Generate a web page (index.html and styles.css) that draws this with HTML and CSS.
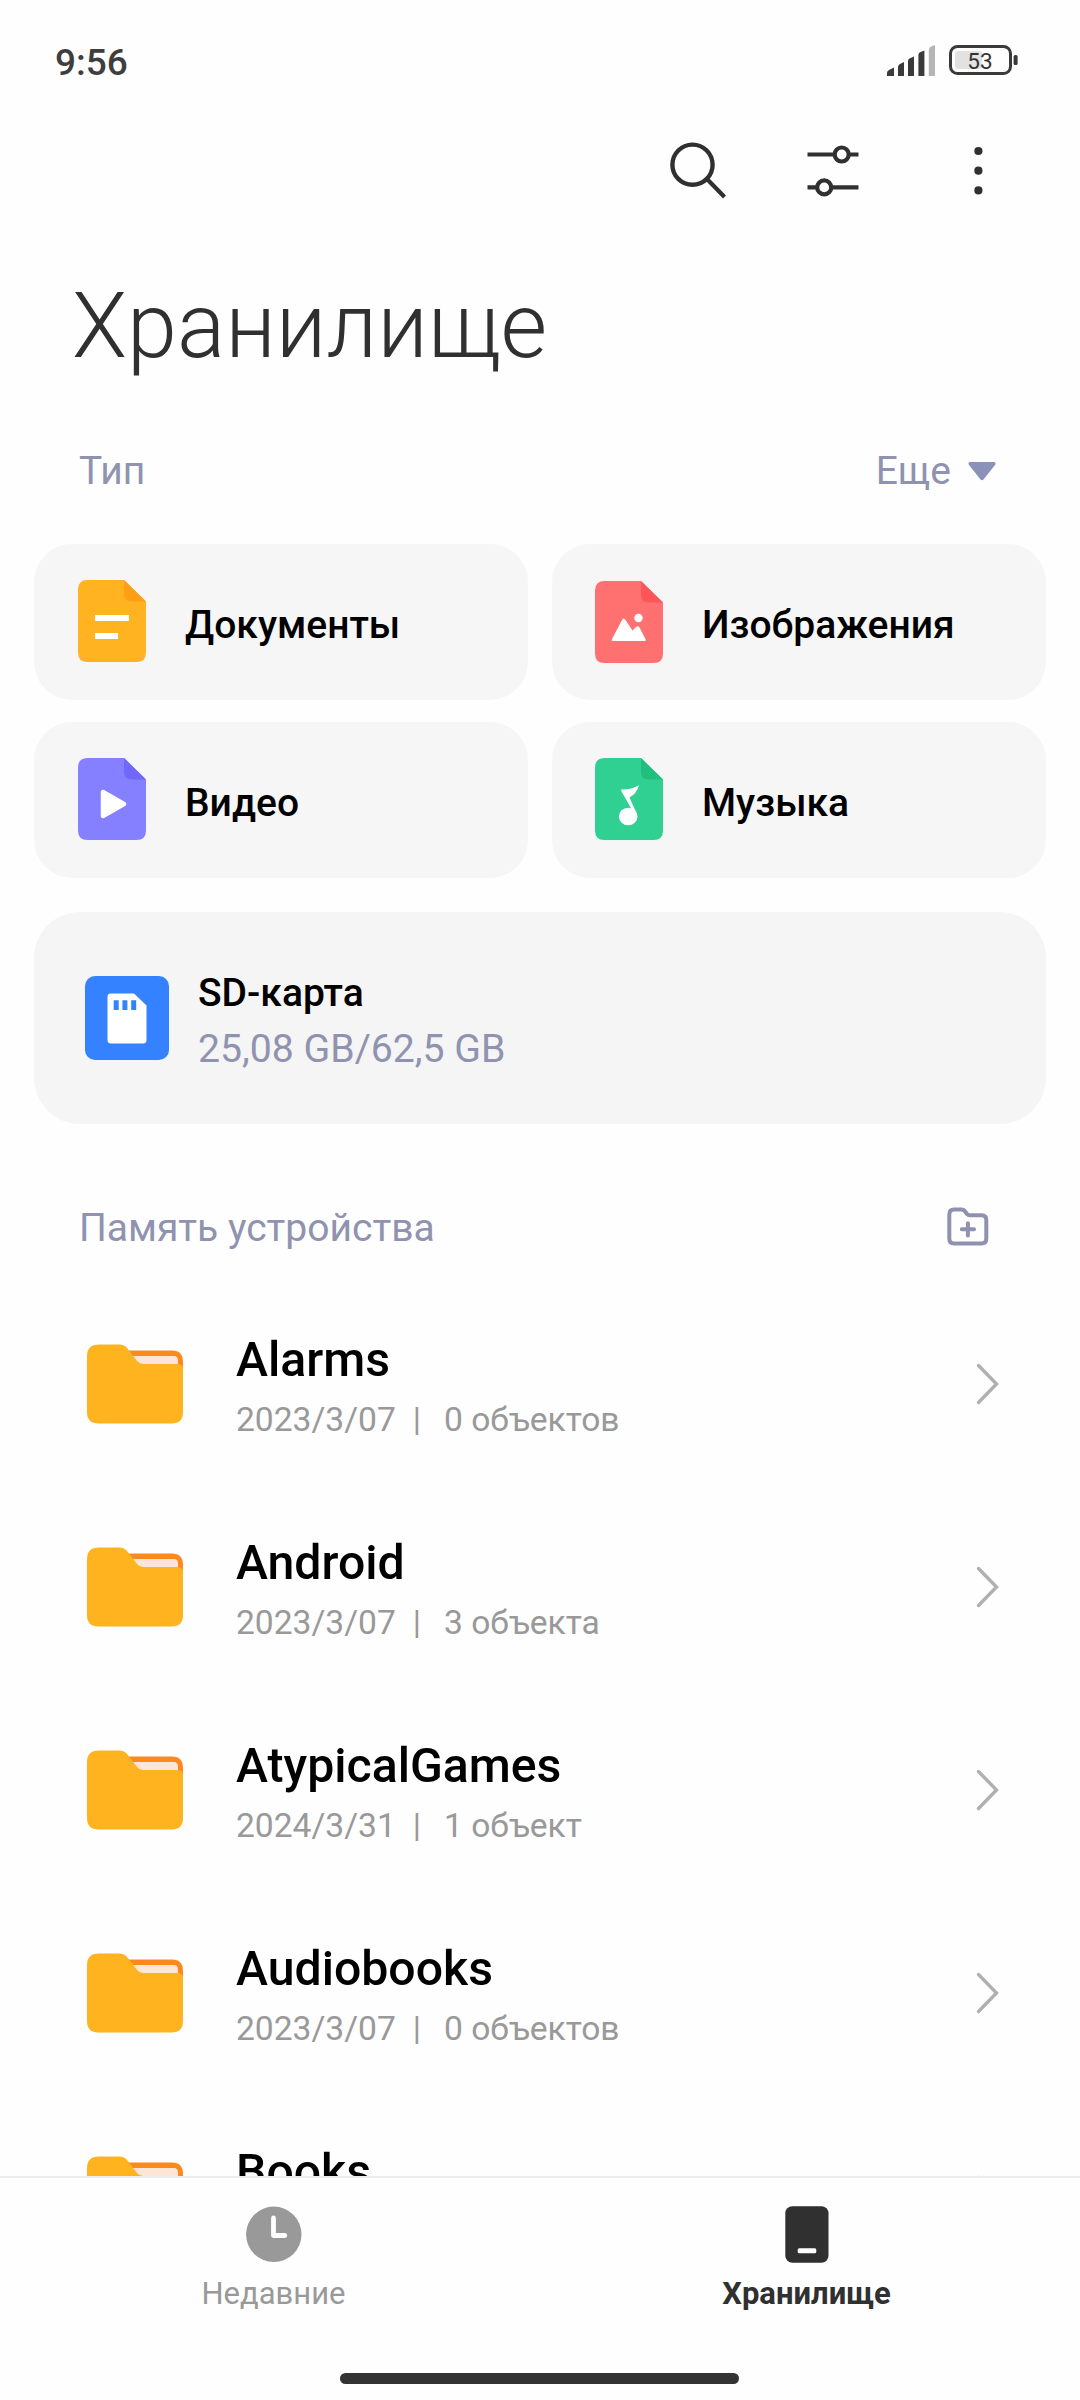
FILE: index.html
```html
<!DOCTYPE html>
<html lang="ru">
<head>
<meta charset="utf-8">
<title>Хранилище</title>
<link rel="stylesheet" href="styles.css">
</head>
<body>
<svg class="defs" width="0" height="0" aria-hidden="true">
  <symbol id="folder" viewBox="0 0 96 80">
    <path d="M34 6.500H85Q96 6.500 96 18V50H34Z" fill="#fb8a1e"/>
    <path d="M38 12H87Q91 12 91 17V40H46Z" fill="#fde6d8"/>
    <path d="M0 12Q0 .500 12 .500H32Q37.500 .500 40.500 4.500L50 17Q52.500 20 56 20H90Q96 20 96 25V68Q96 79.500 84.500 79.500H11.500Q0 79.500 0 68Z" fill="#ffb31f"/>
  </symbol>
  <symbol id="chevron" viewBox="0 0 24 42">
    <path d="M2.500 2.500 20.500 21 2.500 39.500" fill="none" stroke="#b0b0b0" stroke-width="3.400" stroke-linecap="round"/>
  </symbol>
</svg>
<div class="screen">
  <header class="status">
    <span class="clock">9:56</span>
    <svg width="136" height="40" viewBox="884 40 136 40">
      <g fill="#3a3a3a">
        <path d="M887 76V72.500Q887 71 889 70L894 67.500V76Z"/>
        <path d="M898 76V67Q898 65 900 64L904 62V76Z"/>
        <path d="M908 76V61Q908 59 910 58.200L914 56.500V76Z"/>
        <path d="M918.400 76V55Q918.400 53 920 52.200L924.400 50.500V76Z"/>
      </g>
      <path d="M928.800 76V50Q928.800 47.500 931 46.500L935 45V76Z" fill="#b5b5b5"/>
      <rect x="955" y="51" width="27" height="18" rx="3" fill="#e2e2e2"/>
      <rect x="950.500" y="46.500" width="60" height="27" rx="7" fill="none" stroke="#3a3a3a" stroke-width="3"/>
      <rect x="1013.600" y="55" width="4" height="10" rx="1.500" fill="#3a3a3a"/>
      <text class="battery-level" x="980" y="68.700" text-anchor="middle">53</text>
    </svg>
  </header>

  <div class="toolbar">
    <svg width="64" height="64" viewBox="666 138 64 64" fill="none" stroke="#303030" stroke-width="4.400">
      <circle cx="692.500" cy="164.700" r="20.100"/><path d="M707 179 724.500 197" stroke-width="4.200"/>
    </svg>
    <svg width="64" height="64" viewBox="801 138 64 64" fill="none" stroke="#303030" stroke-width="4.200">
      <path d="M807.500 154.500H835M848.500 154.500H858.500M807.500 187.400H817.500M831 187.400H858.500"/>
      <circle cx="841.700" cy="154.500" r="7"/><circle cx="824.200" cy="187.400" r="7"/>
    </svg>
    <svg class="more" width="64" height="64" viewBox="946 138 64 64" fill="#303030">
      <circle cx="978.400" cy="151" r="4.100"/><circle cx="978.400" cy="170.700" r="4.100"/><circle cx="978.400" cy="190.400" r="4.100"/>
    </svg>
  </div>

  <h1 class="title">Хранилище</h1>

  <div class="section-head">
    <span>Тип</span>
    <span class="expand">Еще
      <svg width="28" height="20" viewBox="0 0 28 20"><path d="M2 1H26Q28.500 1.500 27 4L15.500 18.500Q14 20 12.500 18.500L1 4Q-.500 1.500 2 1Z" fill="#8b91b8"/></svg>
    </span>
  </div>

  <div class="types">
    <div class="card">
      <svg width="68" height="82" viewBox="0 0 68 82">
        <path d="M9.500 0H46L68 21.500V72.500Q68 82 58.500 82H9.500Q0 82 0 72.500V9.500Q0 0 9.500 0Z" fill="#ffb320"/>
        <path d="M46 0 68 21.500H54Q46 21.500 46 14Z" fill="#ff9f13"/>
        <path d="M17 35H51V41H17ZM17 53H40V59H17Z" fill="#fff"/>
      </svg>
      <span>Документы</span>
    </div>
    <div class="card right">
      <svg class="image-icon" width="68" height="82" viewBox="0 0 68 82">
        <path d="M9.500 0H46L68 21.500V72.500Q68 82 58.500 82H9.500Q0 82 0 72.500V9.500Q0 0 9.500 0Z" fill="#ff7070"/>
        <path d="M46 0 68 21.500H54Q46 21.500 46 14Z" fill="#ff5558"/>
        <path d="M17.500 60Q16 60 17 58L27 39Q28.700 36 30.500 39L37.500 49.500 40.500 46.500Q42.700 44 44.500 46.500L50.500 58Q51.500 60 50 60Z" fill="#fff"/>
        <circle cx="43.500" cy="37" r="4.200" fill="#fff"/>
      </svg>
      <span>Изображения</span>
    </div>
    <div class="card">
      <svg width="68" height="82" viewBox="0 0 68 82">
        <path d="M9.500 0H46L68 21.500V72.500Q68 82 58.500 82H9.500Q0 82 0 72.500V9.500Q0 0 9.500 0Z" fill="#8580ff"/>
        <path d="M46 0 68 21.500H54Q46 21.500 46 14Z" fill="#7068fb"/>
        <path d="M25 34V58L46 46Z" fill="#fff" stroke="#fff" stroke-width="4.500" stroke-linejoin="round"/>
      </svg>
      <span>Видео</span>
    </div>
    <div class="card right">
      <svg width="68" height="82" viewBox="0 0 68 82">
        <path d="M9.500 0H46L68 21.500V72.500Q68 82 58.500 82H9.500Q0 82 0 72.500V9.500Q0 0 9.500 0Z" fill="#2fd092"/>
        <path d="M46 0 68 21.500H54Q46 21.500 46 14Z" fill="#22bf7c"/>
        <ellipse cx="33.200" cy="58.500" rx="9.300" ry="8.700" fill="#fff"/>
        <path d="M26 31.500Q36 32 44 27.300Q41.500 36 34.500 39.500L42.300 57H38.500L36.500 51L26.300 33Z" fill="#fff"/>
      </svg>
      <span>Музыка</span>
    </div>
  </div>

  <div class="sd">
    <svg width="84" height="84" viewBox="0 0 84 84">
      <rect width="84" height="84" rx="10" fill="#3482ff"/>
      <path d="M25.500 17.500H49L61.500 29.500V64Q61.500 67.500 58 67.500H26Q22.500 67.500 22.500 64V20.500Q22.500 17.500 25.500 17.500Z" fill="#fff"/>
      <path d="M28.700 24.300h5v9.700h-5zM37.400 24.300h5v9.700h-5zM46.200 24.300h5v9.700h-5z" fill="#3482ff"/>
    </svg>
    <div class="sd-text">
      <div class="sd-name">SD-карта</div>
      <div class="sd-size">25,08 GB/62,5 GB</div>
    </div>
  </div>

  <div class="section-head memory">
    <span>Память устройства</span>
    <svg class="new-folder" width="42" height="40" viewBox="0 0 42 40" fill="none" stroke="#8f91b0" stroke-linejoin="round" stroke-linecap="round">
      <path d="M7 2.500H14.500Q17 2.500 18.500 5L20 7Q21 8.300 23 8.300H34.500Q39.300 8.300 39.300 13V31.500Q39.300 36.500 34.500 36.500H7Q2.300 36.500 2.300 31.500V7.500Q2.300 2.500 7 2.500Z" stroke-width="4"/>
      <path d="M14.800 22.300H27M20.900 16.200V28.400" stroke-width="4"/>
    </svg>
  </div>

  <div class="list">
    <div class="row">
      <svg class="folder" width="96" height="80"><use href="#folder"/></svg>
      <div class="info"><div class="name">Alarms</div><div class="meta"><span>2023/3/07</span><span>|</span><span>0 объектов</span></div></div>
      <svg width="24" height="42"><use href="#chevron"/></svg>
    </div>
    <div class="row">
      <svg class="folder" width="96" height="80"><use href="#folder"/></svg>
      <div class="info"><div class="name">Android</div><div class="meta"><span>2023/3/07</span><span>|</span><span>3 объекта</span></div></div>
      <svg width="24" height="42"><use href="#chevron"/></svg>
    </div>
    <div class="row">
      <svg class="folder" width="96" height="80"><use href="#folder"/></svg>
      <div class="info"><div class="name">AtypicalGames</div><div class="meta"><span>2024/3/31</span><span>|</span><span>1 объект</span></div></div>
      <svg width="24" height="42"><use href="#chevron"/></svg>
    </div>
    <div class="row">
      <svg class="folder" width="96" height="80"><use href="#folder"/></svg>
      <div class="info"><div class="name">Audiobooks</div><div class="meta"><span>2023/3/07</span><span>|</span><span>0 объектов</span></div></div>
      <svg width="24" height="42"><use href="#chevron"/></svg>
    </div>
    <div class="row">
      <svg class="folder" width="96" height="80"><use href="#folder"/></svg>
      <div class="info"><div class="name">Books</div><div class="meta"></div></div>
      <svg width="24" height="42"><use href="#chevron"/></svg>
    </div>
  </div>

  <nav class="nav">
    <div class="tabs">
      <div class="tab">
        <svg width="60" height="60" viewBox="0 0 60 60"><circle cx="29.800" cy="29.300" r="27.700" fill="#999"/><path d="M29.500 13V30.500H40.800" fill="none" stroke="#fff" stroke-width="4.800" stroke-linecap="round" stroke-linejoin="round"/></svg>
        <span>Недавние</span>
      </div>
      <div class="tab active">
        <svg width="60" height="60" viewBox="0 0 60 60"><rect x="8.300" y="1.300" width="43.200" height="56.400" rx="7" fill="#303030"/><rect x="20.700" y="43.300" width="18.600" height="5" rx="1.500" fill="#fff"/></svg>
        <span>Хранилище</span>
      </div>
    </div>
    <div class="home"></div>
  </nav>
</div>
</body>
</html>
```

FILE: styles.css
```css
* { box-sizing: border-box; }
body { margin: 0; background: #fefefe; font-family: Roboto, sans-serif; color: #000; }
svg { display: block; flex: none; }
.defs { position: absolute; }
.screen { width: 1080px; height: 2400px; display: flex; flex-direction: column; overflow: hidden; }
.status { height: 120px; flex: none; display: flex; align-items: center; justify-content: space-between; padding: 0 60px 0 55px; }
.clock { margin-top: 5px; font-size: 37px; font-weight: 500; color: #3e3e3e; }
.battery-level { font-size: 22.500px; font-weight: 400; fill: #333; }
.toolbar { height: 100px; flex: none; display: flex; align-items: center; justify-content: flex-end; gap: 71px; padding-right: 70px; }
.more { margin-left: 10px; }
.title { margin: 47px 0 0; padding-left: 72px; font-size: 90px; font-weight: 300; line-height: 120px; color: #303030; }
.section-head { height: 60px; flex: none; margin-top: 54px; padding: 0 84px 0 79px; display: flex; align-items: center; justify-content: space-between; font-size: 39px; color: #8f93b0; }
.expand { display: flex; align-items: center; gap: 17px; }
.types { flex: none; margin: 43px 34px 0; display: grid; grid-template-columns: 494px 494px; grid-auto-rows: 156px; gap: 22px 24px; }
.card { display: flex; align-items: center; gap: 39px; padding: 0 44px 2px; border-radius: 38px; background: #f6f6f6; font-size: 39px; font-weight: 500; }
.card.right { padding-left: 43px; }
.card span { margin-top: 8px; }
.image-icon { margin-top: 2px; }
.sd { flex: none; height: 212px; margin: 34px 34px 0; padding-left: 51px; display: flex; align-items: center; gap: 29px; border-radius: 46px; background: #f5f5f5; font-size: 39px; line-height: 56px; }
.sd-text { padding-top: 6px; }
.sd-name { font-weight: 500; }
.sd-size { font-size: 39.200px; color: #8f93b0; }
.memory { margin-top: 73px; padding-right: 91px; }
.memory span { padding-top: 2px; }
.list { flex: 1; min-height: 0; margin-top: 25px; overflow: hidden; }
.row { height: 203px; display: flex; align-items: center; padding: 0 80px 0 87px; }
.info { flex: 1; margin-left: 53px; padding-top: 6px; }
.name { font-size: 48.200px; font-weight: 500; line-height: 56px; }
.meta { display: flex; height: 44px; margin-top: 10px; font-size: 33.600px; line-height: 44px; color: #999; }
.meta span + span { margin-left: 17px; }
.meta span:last-child { margin-left: 23px; }
.nav { flex: none; height: 224px; border-top: 2px solid #ededed; display: flex; flex-direction: column; align-items: center; }
.tabs { width: 1066px; padding-top: 27px; display: grid; grid-template-columns: 1fr 1fr; }
.tab { display: flex; flex-direction: column; align-items: center; gap: 9px; font-size: 31px; line-height: 40px; color: #999; }
.active { color: #303030; font-weight: 700; }
.home { width: 399px; height: 11px; margin: auto 1px 16px 0; border-radius: 6px; background: #333; }
```
